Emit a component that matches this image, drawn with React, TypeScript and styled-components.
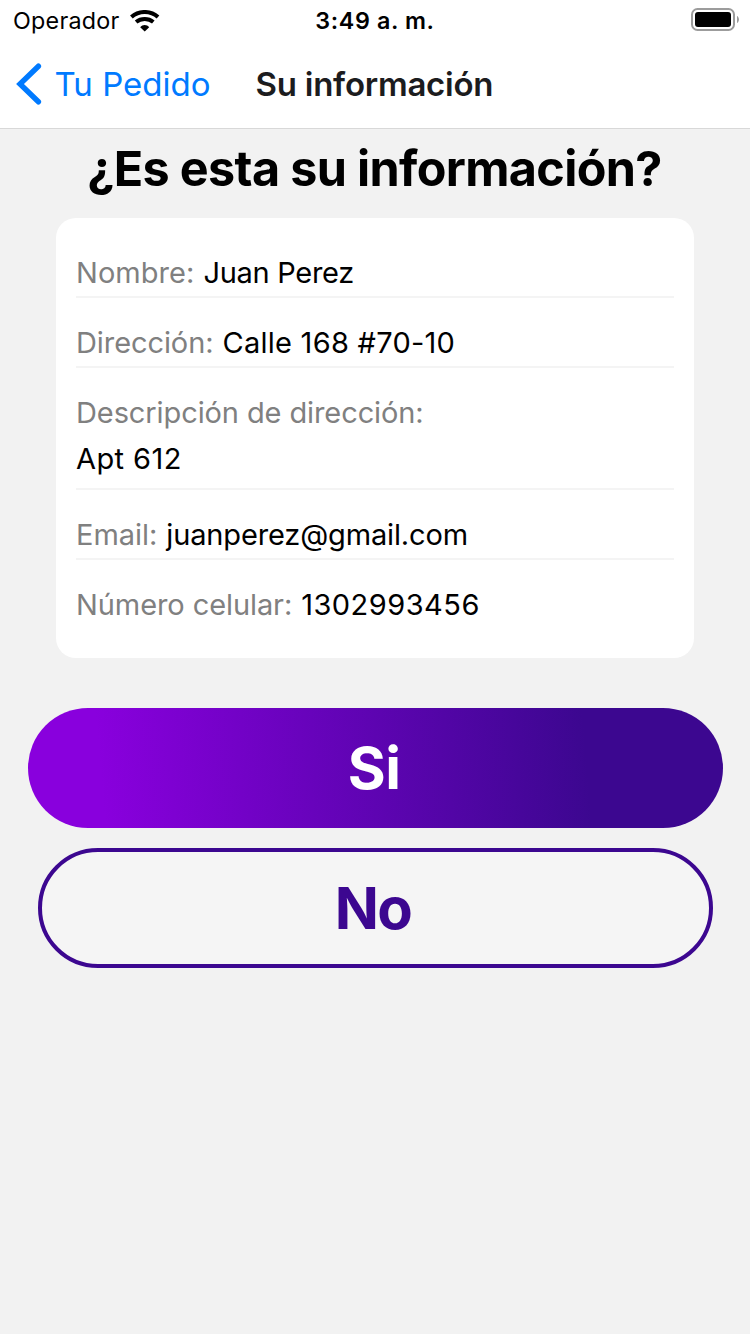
import React from "react";
import styled, { createGlobalStyle } from "styled-components";

const GlobalStyle = createGlobalStyle`
  * { box-sizing: border-box; }
  body {
    margin: 0;
    background: #f2f2f2;
    color: #000;
    font-family: Inter, "Liberation Sans", sans-serif;
  }
`;

const Screen = styled.div`
  display: flex;
  flex-direction: column;
  width: 750px;
  height: 1334px;
  overflow: hidden;
  background: #f2f2f2;
`;

const Header = styled.header`
  height: 129px;
  background: #fff;
  border-bottom: 1px solid #d8d8d8;
`;

const StatusBar = styled.div`
  display: grid;
  grid-template-columns: 1fr auto 1fr;
  align-items: center;
  height: 42px;
  padding: 0 11px 0 13px;
  font-size: 23.3px;
  line-height: 42px;
`;

const Carrier = styled.div`
  display: flex;
  align-items: center;
  gap: 11px;
  letter-spacing: 0.24px;
`;

const Clock = styled.time`
  margin-right: 2px;
  font-weight: 600;
  letter-spacing: 0.62px;
`;

const BatteryIcon = styled.svg`
  justify-self: end;
  margin-bottom: 2px;
`;

const WifiIcon = styled.svg`
  margin-bottom: 1px;
`;

const NavBar = styled.nav`
  display: flex;
  align-items: center;
  height: 84px;
  padding-left: 16px;
  line-height: 84px;
  font-size: 33px;
`;

const BackButton = styled.button`
  display: flex;
  align-items: center;
  gap: 12.5px;
  width: 239.5px;
  padding: 0;
  border: 0;
  background: none;
  color: #007aff;
  font: inherit;
`;

const NavTitle = styled.h1`
  margin: 0;
  color: #1c1c1e;
  font-size: inherit;
  font-weight: 600;
  letter-spacing: -0.24px;
`;

const Question = styled.h2`
  margin: 0;
  padding: 10px 1px 0 0;
  height: 89px;
  font-size: 48.5px;
  font-weight: 700;
  line-height: 60px;
  letter-spacing: -0.664px;
  text-align: center;
`;

const Card = styled.section`
  margin: 0 56px;
  padding: 10px 20px 30px;
  border-radius: 20px;
  background: #fff;
`;

const Row = styled.div<{ $stacked?: boolean }>`
  display: flex;
  flex-direction: ${(p) => (p.$stacked ? "column" : "row")};
  gap: ${(p) => (p.$stacked ? "0" : "9px")};
  padding: 22px 0 ${(p) => (p.$stacked ? "6px" : "0")};
  border-bottom: 2px solid #f4f4f4;
  font-size: 29px;
  line-height: 46px;
  white-space: nowrap;

  &:last-child {
    border-bottom: 0;
  }
`;

const Copy = styled.span<{ $tracking: number; $muted?: boolean }>`
  color: ${(p) => (p.$muted ? "#808080" : "#000")};
  letter-spacing: ${(p) => p.$tracking}px;
`;

const Actions = styled.div`
  display: flex;
  flex-direction: column;
  align-items: center;
  gap: 20px;
  padding-top: 50px;
`;

const PillButton = styled.button`
  height: 120px;
  border: 0;
  border-radius: 60px;
  font-family: inherit;
  font-size: 58px;
  font-weight: 700;
`;

const ConfirmButton = styled(PillButton)`
  width: 695px;
  padding: 0 2px 0 0;
  background: linear-gradient(85deg, #8900dd 11%, #3c0790 80%);
  color: #fff;
  letter-spacing: -0.68px;
`;

const RejectButton = styled(PillButton)`
  width: 675px;
  padding: 0 4px 0 0;
  border: 4px solid #3c0790;
  background: #f5f5f5;
  color: #3c0790;
  letter-spacing: -1.6px;
`;

type Field = {
  label: string;
  labelTracking: number;
  value: string;
  valueTracking: number;
  stacked?: boolean;
};

const fields: Field[] = [
  { label: "Nombre:", labelTracking: 0.04, value: "Juan Perez", valueTracking: -0.29 },
  { label: "Dirección:", labelTracking: -0.085, value: "Calle 168 #70-10", valueTracking: 0.26 },
  { label: "Descripción de dirección:", labelTracking: -0.1, value: "Apt 612", valueTracking: 0.42, stacked: true },
  { label: "Email:", labelTracking: -0.03, value: "juanperez@gmail.com", valueTracking: -0.15 },
  { label: "Número celular:", labelTracking: -0.09, value: "1302993456", valueTracking: 0.48 },
];

const Wifi = () => (
  <WifiIcon width="30" height="22" viewBox="0 0 30 22" fill="none">
    <path d="M1.4 7C8.8 0.3 20.6 0.3 28 7" stroke="#000" strokeWidth="4" />
    <path d="M6.1 12C10.9 8 18.5 8 23.3 12" stroke="#000" strokeWidth="4" />
    <path d="M14.7 21.6L10.2 17.2C12.6 14.2 16.8 14.2 19.2 17.2Z" fill="#000" />
  </WifiIcon>
);

const Battery = () => (
  <BatteryIcon width="48" height="24" viewBox="0 0 48 24">
    <rect x="1" y="1" width="42" height="21" rx="5.5" fill="none" stroke="#9c9c9c" strokeWidth="2" />
    <rect x="4" y="4" width="36" height="15" rx="3" fill="#000" />
    <path d="M46 8C48.6 9.2 48.6 13.8 46 15Z" fill="#9c9c9c" />
  </BatteryIcon>
);

const Chevron = () => (
  <svg width="26" height="42" viewBox="0 0 26 42" fill="none">
    <path d="M22.4 3.2L4 21L22.4 38.8" stroke="#007aff" strokeWidth="5.4" strokeLinecap="round" />
  </svg>
);

export default function App() {
  return (
    <Screen>
      <GlobalStyle />
      <Header>
        <StatusBar>
          <Carrier>
            Operador
            <Wifi />
          </Carrier>
          <Clock>3:49 a. m.</Clock>
          <Battery />
        </StatusBar>
        <NavBar>
          <BackButton>
            <Chevron />
            Tu Pedido
          </BackButton>
          <NavTitle>Su información</NavTitle>
        </NavBar>
      </Header>
      <Question>¿Es esta su información?</Question>
      <Card>
        {fields.map((f) => (
          <Row key={f.label} $stacked={f.stacked}>
            <Copy $muted $tracking={f.labelTracking}>
              {f.label}
            </Copy>
            <Copy $tracking={f.valueTracking}>{f.value}</Copy>
          </Row>
        ))}
      </Card>
      <Actions>
        <ConfirmButton>Si</ConfirmButton>
        <RejectButton>No</RejectButton>
      </Actions>
    </Screen>
  );
}
